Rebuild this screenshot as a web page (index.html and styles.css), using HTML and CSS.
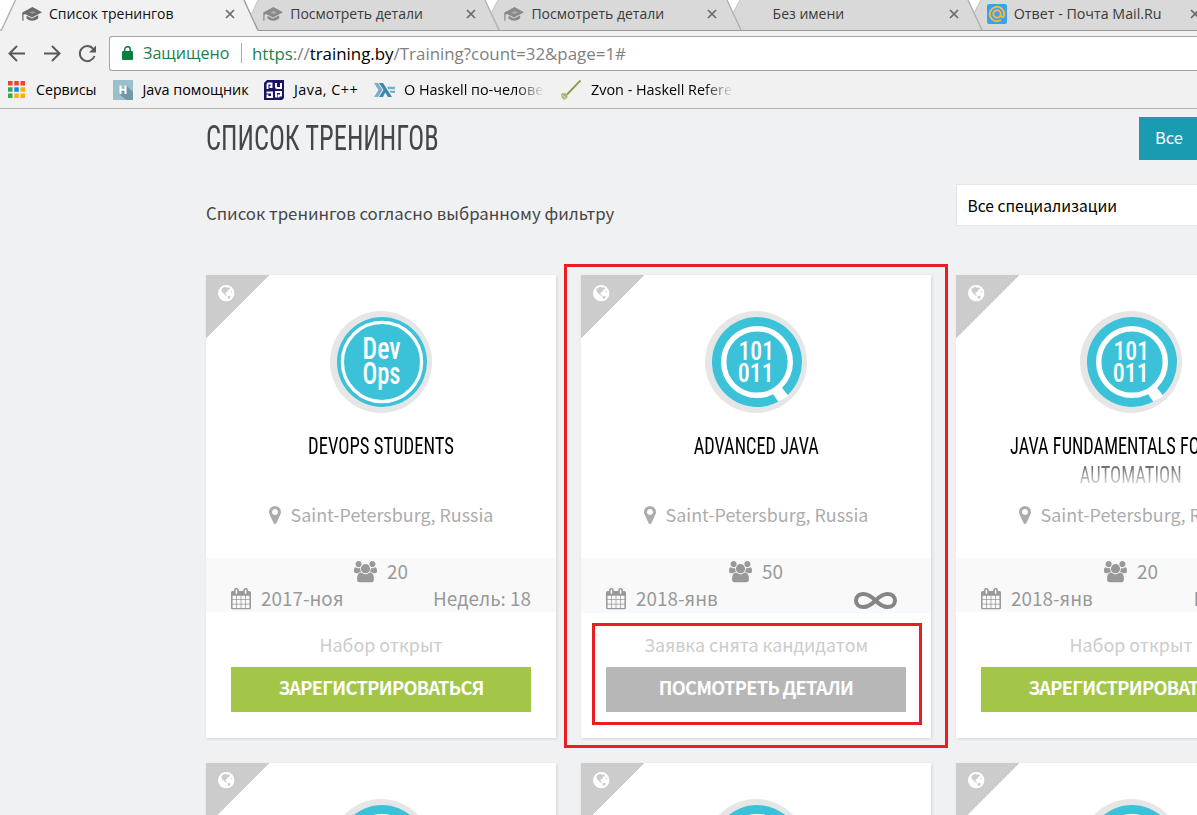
FILE: index.html
```html
<!DOCTYPE html>
<html lang="ru">
<head>
<meta charset="utf-8">
<title>Список тренингов</title>
<link rel="stylesheet" href="styles.css">
</head>
<body>
<svg class="defs" aria-hidden="true">
  <symbol id="cap" viewBox="0 0 20 16">
    <path fill="currentColor" d="M10.500 1 20 6.200 10 11.500 3 8 1.500 9V14.800H.3V6.500z"/>
    <path fill="currentColor" d="M4.500 9.800 10 12.500l6.200-3.200V12.500q-6.200 4.500-11.700 0z"/>
    <path d="M7 6.600 10.500 5 14 6.600 10.500 8z" fill="#fff" fill-opacity=".3"/>
  </symbol>
  <symbol id="close" viewBox="0 0 10 10">
    <path d="M1 1l8 8M9 1 1 9" stroke="currentColor" stroke-width="1.700" fill="none"/>
  </symbol>
  <symbol id="globe" viewBox="0 0 16 16">
    <circle cx="8" cy="8" r="8" fill="#fff"/>
    <path fill="#ccc" d="M3.200 4 5.500 2.200 8 1.800l.5 1 1.500-.6 1.600.8-.4 1.300-1.400.5-.5 1.500-1.600.9-.7 1.400 1 .6.6 1.400-1.300-.4-1.700-1.600L4 7z"/>
    <path fill="#ccc" d="M9 11.200l2.300-.7 1 1-.8 1.600-1.500.5zM12 6.300l1.300-.5.4.8-.9.6z"/>
  </symbol>
  <symbol id="pin" viewBox="384 128 1024 1536">
    <path fill="currentColor" d="M1152 640q0-106-75-181t-181-75-181 75-75 181 75 181 181 75 181-75 75-181zm256 0q0 109-33 179l-364 774q-16 33-47.500 52t-67.500 19-67.500-19-46.500-52l-365-774q-33-70-33-179 0-212 150-362t362-150 362 150 150 362z"/>
  </symbol>
  <symbol id="calendar" viewBox="64 0 1664 1792">
    <path fill="currentColor" d="M192 1664h288v-288h-288v288zm352 0h320v-288h-320v288zm-352-352h288v-320h-288v320zm352 0h320v-320h-320v320zm-352-384h288v-288h-288v288zm736 736h320v-288h-320v288zm-384-736h320v-288h-320v288zm768 736h288v-288h-288v288zm-384-352h320v-320h-320v320zm-352-864v-288q0-13-9.500-22.500t-22.500-9.500h-64q-13 0-22.500 9.500t-9.500 22.500v288q0 13 9.500 22.500t22.500 9.500h64q13 0 22.500-9.500t9.500-22.500zm736 864h288v-320h-288v320zm-384-384h320v-288h-320v288zm384 0h288v-288h-288v288zm32-480v-288q0-13-9.500-22.500t-22.500-9.500h-64q-13 0-22.500 9.500t-9.500 22.500v288q0 13 9.500 22.500t22.500 9.500h64q13 0 22.500-9.500t9.500-22.500zm384-64v1280q0 52-38 90t-90 38h-1408q-52 0-90-38t-38-90v-1280q0-52 38-90t90-38h128v-96q0-66 47-113t113-47h64q66 0 113 47t47 113v96h384v-96q0-66 47-113t113-47h64q66 0 113 47t47 113v96h128q52 0 90 38t38 90z"/>
  </symbol>
  <symbol id="users" viewBox="-64 0 1920 1792">
    <path fill="currentColor" d="M529 896q-162 5-265 128h-134q-82 0-138-40.500t-56-118.500q0-353 124-353 6 0 43.500 21t97.500 42.500 119 21.500q67 0 133-23-5 37-5 66 0 139 81 256zm1071 637q0 120-73 189.500t-194 69.500h-874q-121 0-194-69.500t-73-189.500q0-53 3.500-103.500t14-109 26.500-108.500 43-97.500 62-81 85.500-53.500 111.500-20q10 0 43 21.500t73 48 107 48 135 21.500 135-21.500 107-48 73-48 43-21.500q61 0 111.500 20t85.500 53.500 62 81 43 97.500 26.500 108.500 14 109 3.500 103.500zm-1024-1277q0 106-75 181t-181 75-181-75-75-181 75-181 181-75 181 75 75 181zm704 384q0 159-112.500 271.500t-271.500 112.500-271.500-112.500-112.500-271.500 112.500-271.500 271.500-112.500 271.500 112.500 112.500 271.500zm576 225q0 78-56 118.500t-138 40.500h-134q-103-123-265-128 81-117 81-256 0-29-5-66 66 23 133 23 59 0 119-21.500t97.500-42.500 43.500-21q124 0 124 353zm-128-609q0 106-75 181t-181 75-181-75-75-181 75-181 181-75 181 75 75 181z"/>
  </symbol>
  <symbol id="skill-code" viewBox="0 0 102 102">
    <circle cx="52" cy="51" r="45" fill="#3bc2d9"/>
    <circle cx="52" cy="51" r="33.300" fill="none" stroke="#fff" stroke-width="5.400"/>
    <path fill="#fff" d="M67.700 82.500 76.700 76.500 83.500 85 73.300 90.800z"/>
  </symbol>
</svg>

<header class="browser">
  <div class="tabs">
    <svg class="tabs-shape" width="1197" height="31" viewBox="0 0 1197 31" fill="none">
      <path fill="#fff" d="M0 0h1197v31H0z"/>
      <path fill="#d9d9d9" d="M258 0H485L491 12.500 498 0H727L732.500 12.500 740 0H968L973.500 12.500 981 0H1197V30H258L251.500 14z"/>
      <path fill="#f1f1f1" d="M15.500 0H244L258.500 31H1z"/>
      <path stroke="#b0b0b0" stroke-width="1.400" d="M15.500 0 1.500 30H0M485 0l14 30M727 0l14 30M968 0l14 30"/>
      <path stroke="#9a9a9a" stroke-width="1.400" d="M244 0 258 30.400"/>
      <path stroke="#c4c4c4" d="M258 0l-6.500 14M498 0l-6.500 12.500M740 0l-6.500 12.500M981 0l-6.500 12.500"/>
      <path stroke="#9a9a9a" d="M258 30.500H1197"/>
    </svg>
    <div class="tab tab-active"><svg class="tab-icon"><use href="#cap"/></svg><span class="tab-title">Список тренингов</span><svg class="tab-close"><use href="#close"/></svg></div>
    <div class="tab"><svg class="tab-icon"><use href="#cap"/></svg><span class="tab-title">Посмотреть детали</span><svg class="tab-close"><use href="#close"/></svg></div>
    <div class="tab"><svg class="tab-icon"><use href="#cap"/></svg><span class="tab-title">Посмотреть детали</span><svg class="tab-close"><use href="#close"/></svg></div>
    <div class="tab"><svg class="tab-icon"></svg><span class="tab-title">Без имени</span><svg class="tab-close"><use href="#close"/></svg></div>
    <div class="tab tab-mail">
      <svg class="tab-icon" viewBox="0 0 20 20" fill="none">
        <rect width="20" height="20" rx="2" fill="#35a3ee"/>
        <path d="M13.700 10a3.700 3.700 0 1 1-7.400 0 3.700 3.700 0 0 1 7.400 0zv1.200q.2 2 2 1.800 1.500-.3 1.500-3a7.200 7.200 0 1 0-3.200 6" stroke="#fdb53c" stroke-width="1.900"/>
      </svg>
      <span class="tab-title">Ответ - Почта Mail.Ru</span><svg class="tab-close"><use href="#close"/></svg>
    </div>
  </div>

  <div class="toolbar">
    <svg class="nav-icons" width="100" height="34" viewBox="0 0 100 34" fill="none" stroke="#5a5a5a" stroke-width="2">
      <path d="M25 17.500H10M17 10l-7.500 7.500L17 25"/>
      <path d="M44 17.500h15.500M52 10l7.500 7.500L52 25"/>
      <path d="M93.300 13A7.500 7.500 0 1 0 94.500 20"/>
      <path d="M96 9.500v7h-7z" fill="#5a5a5a" stroke="none"/>
    </svg>
    <div class="omnibox">
      <svg class="lock" viewBox="0 0 11 14"><rect y="5" width="11" height="9" rx="1" fill="#0b8043"/><path d="M2.700 6V3.500a2.800 2.800 0 0 1 5.600 0V6" fill="none" stroke="#0b8043" stroke-width="1.500"/></svg>
      <span class="secure">Защищено</span>
      <span class="url"><span class="url-scheme">https</span>://<span class="url-host">training.by</span>/Training?count=32&amp;page=1#</span>
    </div>
  </div>

  <nav class="bookmarks">
    <a class="bm bm-apps">
      <svg width="17" height="17" viewBox="0 0 17 17"><path fill="#ea4335" d="M0 0h4.500v4.500H0zM6.300 0h4.500v4.500H6.300zM12.500 0H17v4.500h-4.500z"/><path fill="#34a853" d="M0 6.300h4.500v4.500H0zM0 12.500h4.500V17H0z"/><path fill="#1a82f0" d="M6.300 6.300h4.500v4.500H6.300z"/><path fill="#fbb100" d="M12.500 6.300H17v4.500h-4.500zM12.500 12.500H17V17h-4.500zM6.300 12.500h4.500V17H6.300z"/></svg>
      <span>Сервисы</span>
    </a>
    <a class="bm bm-java">
      <svg width="20" height="20" viewBox="0 0 20 20"><path fill="#9bc0cd" d="M0 0h20v20H0z"/><path fill="#7497a6" d="M13.500 5.500 20 12v8h-6.500L6 14l2-3z"/><path fill="none" stroke="#fff" stroke-width="2" d="M7.500 5.500V14M12.500 5.500V14M7.500 9.700h5"/></svg>
      <span>Java помощник</span>
    </a>
    <a class="bm bm-cpp">
      <svg width="20" height="20" viewBox="0 0 20 20"><path fill="#1b1464" d="M3 0h17v18l-2 2H0V3z"/><path fill="none" stroke="#fff" stroke-width="1.900" d="M3.500 9V4.500q0-1 1-1H7.500V7H5.500M12 3v4q0 1 1 1h4V3M2.500 12.500H8V17H3.500v-2.500M12 17.500v-5.500h5v3.500h-2.500v2"/></svg>
      <span>Java, C++</span>
    </a>
    <a class="bm bm-haskell">
      <svg width="21" height="14" viewBox="0 0 21 14"><path fill="#76afcb" d="M0 0h4L8.500 7 4 14H0l4.500-7z"/><path fill="#3f86ad" d="M5 0h4l9 14h-4l-2.800-4.400L9 14H5l4.500-7z"/><path fill="#76afcb" d="M13 3.800h8v2.400h-6.500zM15.300 7.700H21v2.400h-4.200z"/></svg>
      <span class="bm-fade">О Haskell по-челове</span>
    </a>
    <a class="bm bm-zvon">
      <svg width="20" height="20" viewBox="0 0 20 20"><path d="M19.500.5 6 14.500" stroke="#8c9c4a" stroke-width="1.900"/><path d="M0 14q3-1.500 5-.5Q7.500 16 6 18l-2 1.800Q0 19 0 14z" fill="#a9b86a"/><path d="M1 15l4.500 4" stroke="#d9e0b5"/></svg>
      <span class="bm-fade">Zvon - Haskell Refere</span>
    </a>
  </nav>
</header>

<main class="page">
  <div class="page-head">
    <h1 class="page-title"><span>СПИСОК ТРЕНИНГОВ</span></h1>
    <a class="filter-all">Все</a>
  </div>
  <div class="page-sub">
    <p class="page-note">Список тренингов согласно выбранному фильтру</p>
    <div class="select">Все специализации</div>
  </div>

  <section class="cards">
    <article class="card">
      <div class="corner"><svg><use href="#globe"/></svg></div>
      <div class="avatar">
        <svg viewBox="0 0 102 102">
          <circle cx="52" cy="51" r="45" fill="#3bc2d9"/>
          <circle cx="52" cy="51" r="39.600" fill="none" stroke="#fff" stroke-width="3.300"/>
          <g class="badge-devops">
            <text x="32.500" y="47.500" textLength="38" lengthAdjust="spacingAndGlyphs">Dev</text>
            <text x="32.500" y="72.700" textLength="38" lengthAdjust="spacingAndGlyphs">Ops</text>
          </g>
        </svg>
      </div>
      <h2 class="card-title"><span class="t-devops">DEVOPS STUDENTS</span></h2>
      <p class="place"><svg><use href="#pin"/></svg><span>Saint-Petersburg, Russia</span></p>
      <div class="stats">
        <div class="stat-count"><svg><use href="#users"/></svg><span>20</span></div>
        <div class="stat-row"><span class="stat-date"><svg><use href="#calendar"/></svg><span>2017-ноя</span></span><span>Недель: 18</span></div>
      </div>
      <p class="status">Набор открыт</p>
      <a class="btn btn-green">ЗАРЕГИСТРИРОВАТЬСЯ</a>
    </article>

    <article class="card">
      <div class="corner"><svg><use href="#globe"/></svg></div>
      <div class="avatar">
        <svg viewBox="0 0 102 102">
          <use href="#skill-code"/>
          <g class="badge-code">
            <text x="33.500" y="48.800" textLength="35.500" lengthAdjust="spacingAndGlyphs">101</text>
            <text x="32.800" y="70.700" textLength="36" lengthAdjust="spacingAndGlyphs">011</text>
          </g>
        </svg>
      </div>
      <h2 class="card-title"><span class="t-java">ADVANCED JAVA</span></h2>
      <p class="place"><svg><use href="#pin"/></svg><span>Saint-Petersburg, Russia</span></p>
      <div class="stats stats-tall">
        <div class="stat-count"><svg><use href="#users"/></svg><span>50</span></div>
        <div class="stat-row"><span class="stat-date"><svg><use href="#calendar"/></svg><span>2018-янв</span></span>
          <svg class="infinity" viewBox="0 0 43 17" fill="none" stroke="#858585" stroke-width="4"><path d="M21.500 8.500C17 4 13.500 2 9.500 2 5 2 2 4.500 2 8.500S5 15 9.500 15c4 0 7.500-2 12-6.500S29.500 2 33.500 2C38 2 41 4.500 41 8.500S38 15 33.500 15c-4 0-7.500-2-12-6.500z"/></svg>
        </div>
      </div>
      <p class="status">Заявка снята кандидатом</p>
      <a class="btn btn-gray">ПОСМОТРЕТЬ ДЕТАЛИ</a>
      <div class="mark mark-card"></div>
      <div class="mark mark-action"></div>
    </article>

    <article class="card">
      <div class="corner"><svg><use href="#globe"/></svg></div>
      <div class="avatar">
        <svg viewBox="0 0 102 102">
          <use href="#skill-code"/>
          <g class="badge-code">
            <text x="33.500" y="48.800" textLength="35.500" lengthAdjust="spacingAndGlyphs">101</text>
            <text x="32.800" y="70.700" textLength="36" lengthAdjust="spacingAndGlyphs">011</text>
          </g>
        </svg>
      </div>
      <h2 class="card-title card-title-long"><span class="t-fund">JAVA FUNDAMENTALS FOR TEST</span><span class="t-auto">AUTOMATION</span></h2>
      <p class="place"><svg><use href="#pin"/></svg><span>Saint-Petersburg, Russia</span></p>
      <div class="stats">
        <div class="stat-count"><svg><use href="#users"/></svg><span>20</span></div>
        <div class="stat-row"><span class="stat-date"><svg><use href="#calendar"/></svg><span>2018-янв</span></span><span>Недель: 8</span></div>
      </div>
      <p class="status">Набор открыт</p>
      <a class="btn btn-green">ЗАРЕГИСТРИРОВАТЬСЯ</a>
    </article>

    <article class="card card-next">
      <div class="corner"><svg><use href="#globe"/></svg></div>
      <div class="avatar"><svg><use href="#skill-code"/></svg></div>
    </article>
    <article class="card card-next">
      <div class="corner"><svg><use href="#globe"/></svg></div>
      <div class="avatar"><svg><use href="#skill-code"/></svg></div>
    </article>
    <article class="card card-next">
      <div class="corner"><svg><use href="#globe"/></svg></div>
      <div class="avatar"><svg><use href="#skill-code"/></svg></div>
    </article>
  </section>
</main>
</body>
</html>
```
FILE: styles.css
```css
* { box-sizing: border-box; margin: 0; padding: 0; }
html, body { height: 815px; overflow: hidden; }
body {
  background: #f0f1f3;
  font-family: "Noto Sans CJK SC", "Noto Sans", sans-serif;
  color: #464646;
}
svg { display: block; flex: none; }
.defs { position: absolute; width: 0; height: 0; }

/* Browser chrome */
.browser {
  height: 109px;
  background: #f1f1f1;
  border-bottom: 1px solid #b4b4b4;
  font-family: "Open Sans", "Noto Sans", sans-serif;
  color: #000;
  overflow: hidden;
}
.tabs { position: relative; display: flex; height: 31px; padding-left: 22px; }
.tabs-shape { position: absolute; left: 0; top: 0; }
.tab {
  position: relative;
  flex: none;
  width: 241.200px;
  height: 28px;
  display: flex;
  align-items: center;
  color: #3a3a3a;
  font-size: 14px;
}
.tab-active { color: #111; }
.tab-icon { width: 20px; height: 16px; margin-right: 7px; color: #8a8a8a; }
.tab-active .tab-icon { color: #6a6a6a; }
.tab-mail { font-size: 14.250px; }
.tab-mail .tab-icon { height: 20px; }
.tab-title { width: 176px; padding-bottom: 2px; white-space: nowrap; }
.tab-close { width: 10px; height: 10px; color: #6b6b6b; }

.toolbar { display: flex; padding-top: 5px; }
.nav-icons { width: 100px; height: 34px; margin-right: 9px; }
.omnibox {
  flex: 1;
  height: 35px;
  display: flex;
  align-items: center;
  padding: 0 0 1px 12px;
  background: #fff;
  border: 1px solid #a3a3a3;
  border-right: 0;
  border-radius: 3px 0 0 3px;
  font-size: 16.900px;
  white-space: nowrap;
}
.lock { width: 11px; height: 14px; margin-right: 10px; }
.secure {
  width: 99px;
  height: 20px;
  line-height: 20px;
  margin-right: 10px;
  border-right: 1px solid #a9a9a9;
  font-size: 16.100px;
  color: #1b7f4b;
}
.url { color: #808080; }
.url-scheme { color: #1b7f4b; }
.url-host { color: #000; }

.bookmarks { display: flex; height: 37px; padding-left: 8px; font-size: 14.400px; }
.bm { display: flex; align-items: center; white-space: nowrap; }
.bm-apps { width: 105px; gap: 11px; font-size: 14.200px; }
.bm-java { width: 151px; gap: 9.500px; }
.bm-cpp { width: 110px; gap: 10px; letter-spacing: .45px; }
.bm-haskell { width: 187px; gap: 9px; }
.bm-zvon { gap: 10px; }
.bm-fade {
  -webkit-mask-image: linear-gradient(90deg, #000 80%, transparent 101%);
  mask-image: linear-gradient(90deg, #000 80%, transparent 101%);
}

/* Page */
.page { padding-left: 206px; height: 706px; overflow: hidden; }
.page-head { display: flex; justify-content: space-between; padding-top: 8px; height: 75px; }
.page-title {
  height: 42px;
  line-height: 44px;
  font-family: Roboto, sans-serif;
  font-stretch: 75%;
  font-weight: 450;
  font-size: 35px;
  white-space: nowrap;
}
.page-title span { display: inline-block; transform: scaleX(.757); transform-origin: 0 50%; }
.filter-all {
  width: 58px;
  height: 43px;
  line-height: 40px;
  padding-left: 16px;
  background: #1b9bb2;
  color: #fff;
  font-size: 16.500px;
}
.page-sub { display: flex; justify-content: space-between; height: 91px; }
.page-note { padding-top: 15px; line-height: 28px; font-size: 16.790px; }
.select {
  width: 241px;
  height: 42px;
  line-height: 40px;
  padding-left: 10.500px;
  border: 1px solid #e3e5e6;
  border-right: 0;
  background: #fff;
  color: #000;
  font-size: 15.600px;
}

.cards { display: grid; grid-template-columns: repeat(3, 350px); gap: 25px; }
.card {
  position: relative;
  height: 463px;
  padding-top: 36px;
  background: #fff;
  box-shadow: 1px 1px 3px rgba(0, 0, 0, .13);
}
.corner {
  position: absolute;
  left: 0;
  top: 0;
  width: 63px;
  height: 63px;
  padding: 10px 12px;
  background: linear-gradient(135deg, #ccc 50%, transparent 50.500%);
}
.corner svg { width: 16.500px; height: 16.500px; }
.card-next .corner { padding-top: 9px; }
.avatar {
  width: 102px;
  height: 102px;
  margin: 0 auto;
  border-radius: 50%;
  background: #e6e6e6;
}
.avatar svg { width: 102px; height: 102px; }
.badge-code, .badge-devops { font-family: Roboto, sans-serif; font-stretch: 75%; font-weight: 500; fill: #fff; }
.badge-code { font-size: 25.500px; }
.badge-devops { font-size: 31px; }
.card-title {
  position: relative;
  height: 58px;
  margin-top: 18px;
  display: flex;
  flex-direction: column;
  align-items: center;
  font-family: Roboto, sans-serif;
  font-stretch: 75%;
  font-weight: 400;
  font-size: 23.500px;
  line-height: 29px;
  color: #000;
  white-space: nowrap;
}
.card-title span { height: 29px; padding-top: 1px; transform: scaleX(.78); }
.card-title .t-devops { transform: scaleX(.793); }
.card-title .t-auto { transform: scaleX(.788); }
.card-title-long::after {
  content: "";
  position: absolute;
  left: 0;
  right: 0;
  top: 30px;
  height: 29px;
  background: linear-gradient(rgba(255, 255, 255, .3), #fff);
}
.place {
  height: 28px;
  margin-top: 12px;
  display: flex;
  justify-content: center;
  align-items: center;
  font-size: 17.900px;
  line-height: 28px;
  color: #acacac;
}
.place span { height: 30px; }
.place svg { width: 12px; height: 18px; margin-right: 10px; }
.stats {
  height: 54px;
  margin-top: 29px;
  padding: 0 25px;
  background: #f9f9f9;
  color: #999;
  font-size: 18.900px;
  line-height: 25px;
}
.stats-tall { height: 55px; margin-bottom: -1px; }
.stat-count { display: flex; justify-content: center; height: 27px; }
.stat-count svg { width: 23px; height: 21.500px; margin: 3px 10px 0 0; }
.stat-row { display: flex; justify-content: space-between; height: 27px; }
.stat-date { display: flex; }
.stat-date svg { width: 20px; height: 21.500px; margin: 3px 10px 0 0; }
.infinity { width: 43px; height: 17px; margin: 7px 9px 0 0; }
.status {
  height: 27px;
  margin-top: 20px;
  line-height: 25px;
  text-align: center;
  font-size: 17.850px;
  color: #ccc;
}
.btn {
  display: block;
  height: 45px;
  margin: 8px 25px 0;
  line-height: 40px;
  text-align: center;
  font-weight: 700;
  font-size: 18.200px;
  letter-spacing: -.65px;
  color: #fff;
}
.btn-green { background: #a4c648; }
.btn-gray { background: #b7b7b7; }

/* Highlight frames */
.mark { position: absolute; z-index: 2; border: 3px solid #ed1c24; }
.mark-card { left: -17px; top: -11px; width: 384px; height: 484px; }
.mark-action { left: 11px; top: 348px; width: 330px; height: 102px; }
```
